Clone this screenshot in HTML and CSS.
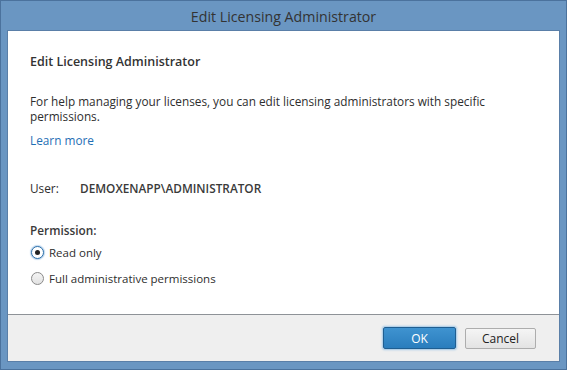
FILE: index.html
```html
<!DOCTYPE html>
<html>
<head>
<meta charset="utf-8">
<link rel="stylesheet" href="styles.css">
</head>
<body>
<div class="window">
  <div class="titlebar">Edit Licensing Administrator</div>
  <div class="client">
    <div class="main">
      <div class="heading">Edit Licensing Administrator</div>
      <p class="desc">For help managing your licenses, you can edit licensing administrators with specific permissions.</p>
      <a class="link" href="#">Learn more</a>
      <div class="user-row"><span class="user-label">User:</span><span class="user-value">DEMOXENAPP\ADMINISTRATOR</span></div>
      <div class="perm-label">Permission:</div>
      <label class="radio radio-first"><span class="dot checked"></span>Read only</label>
      <label class="radio radio-second"><span class="dot"></span>Full administrative permissions</label>
    </div>
    <div class="footer">
      <button class="btn btn-ok">OK</button>
      <button class="btn btn-cancel">Cancel</button>
    </div>
  </div>
</div>
</body>
</html>
```
FILE: styles.css
```css
html, body { margin: 0; padding: 0; }
body {
  width: 567px;
  height: 370px;
  font-family: "Open Sans", "Noto Sans", sans-serif;
  font-size: 11.8px;
  color: #2e2e2e;
}
.window {
  box-sizing: border-box;
  width: 567px;
  height: 370px;
  background: #6a96c2;
  border: 1px solid #4b729d;
  padding: 0 6px 7px 6px;
  display: flex;
  flex-direction: column;
}
.titlebar {
  height: 29px;
  line-height: 31px;
  text-align: center;
  font-size: 14.2px;
  color: #333;
  flex: none;
}
.client {
  flex: 1;
  display: flex;
  flex-direction: column;
  border: 1px solid #5a7fa8;
  background: #ffffff;
}
.main {
  flex: 1;
  padding: 23px 22px 0 22px;
}
.heading {
  font-weight: 600;
  font-size: 12.5px;
  line-height: 16px;
  color: #333;
}
.desc {
  margin: 24px 0 0 0;
  line-height: 15px;
  width: 500px;
}
.link {
  display: block;
  margin-top: 9px;
  line-height: 15px;
  color: #1f6fb5;
  text-decoration: none;
}
.user-row {
  margin-top: 33px;
  line-height: 15px;
  display: flex;
}
.user-label { width: 50px; }
.user-value { font-weight: 600; color: #3a3a3a; }
.perm-label {
  margin-top: 27px;
  line-height: 15px;
  font-weight: 600;
  color: #3a3a3a;
}
.radio {
  display: flex;
  align-items: center;
  line-height: 15px;
  height: 15px;
  font-size: 11.5px;
}
.radio-first { margin-top: 7px; }
.radio-second { margin-top: 11px; }
.dot {
  box-sizing: border-box;
  width: 13px;
  height: 13px;
  border-radius: 50%;
  border: 1px solid #8a8a8a;
  background: linear-gradient(#f4f4f4, #e2e2e2);
  margin: 0 5px 0 1px;
  position: relative;
}
.dot.checked {
  border-color: #2d6fa8;
  box-shadow: 0 0 1px 1px #bcd6ee;
  background: #fff;
}
.dot.checked::after {
  content: "";
  position: absolute;
  left: 3px;
  top: 3px;
  width: 5px;
  height: 5px;
  border-radius: 50%;
  background: #222;
}
.footer {
  flex: none;
  height: 46px;
  border-top: 1px solid #8e9297;
  background: #efefef;
  display: flex;
  justify-content: flex-end;
  align-items: center;
  padding-right: 23px;
  gap: 9px;
}
.btn {
  font-family: inherit;
  font-size: 12px;
  height: 21px;
  padding: 0;
  border-radius: 2px;
}
.btn-ok {
  width: 73px;
  height: 22px;
  color: #fff;
  background: linear-gradient(#3f93d0, #2a7dbd);
  border: 1px solid #1f5e91;
  box-shadow: 0 0 2px 1px #9fc6e6;
}
.btn-cancel {
  width: 71px;
  color: #222;
  background: linear-gradient(#f5f5f5, #e3e3e3);
  border: 1px solid #adadad;
}
```
